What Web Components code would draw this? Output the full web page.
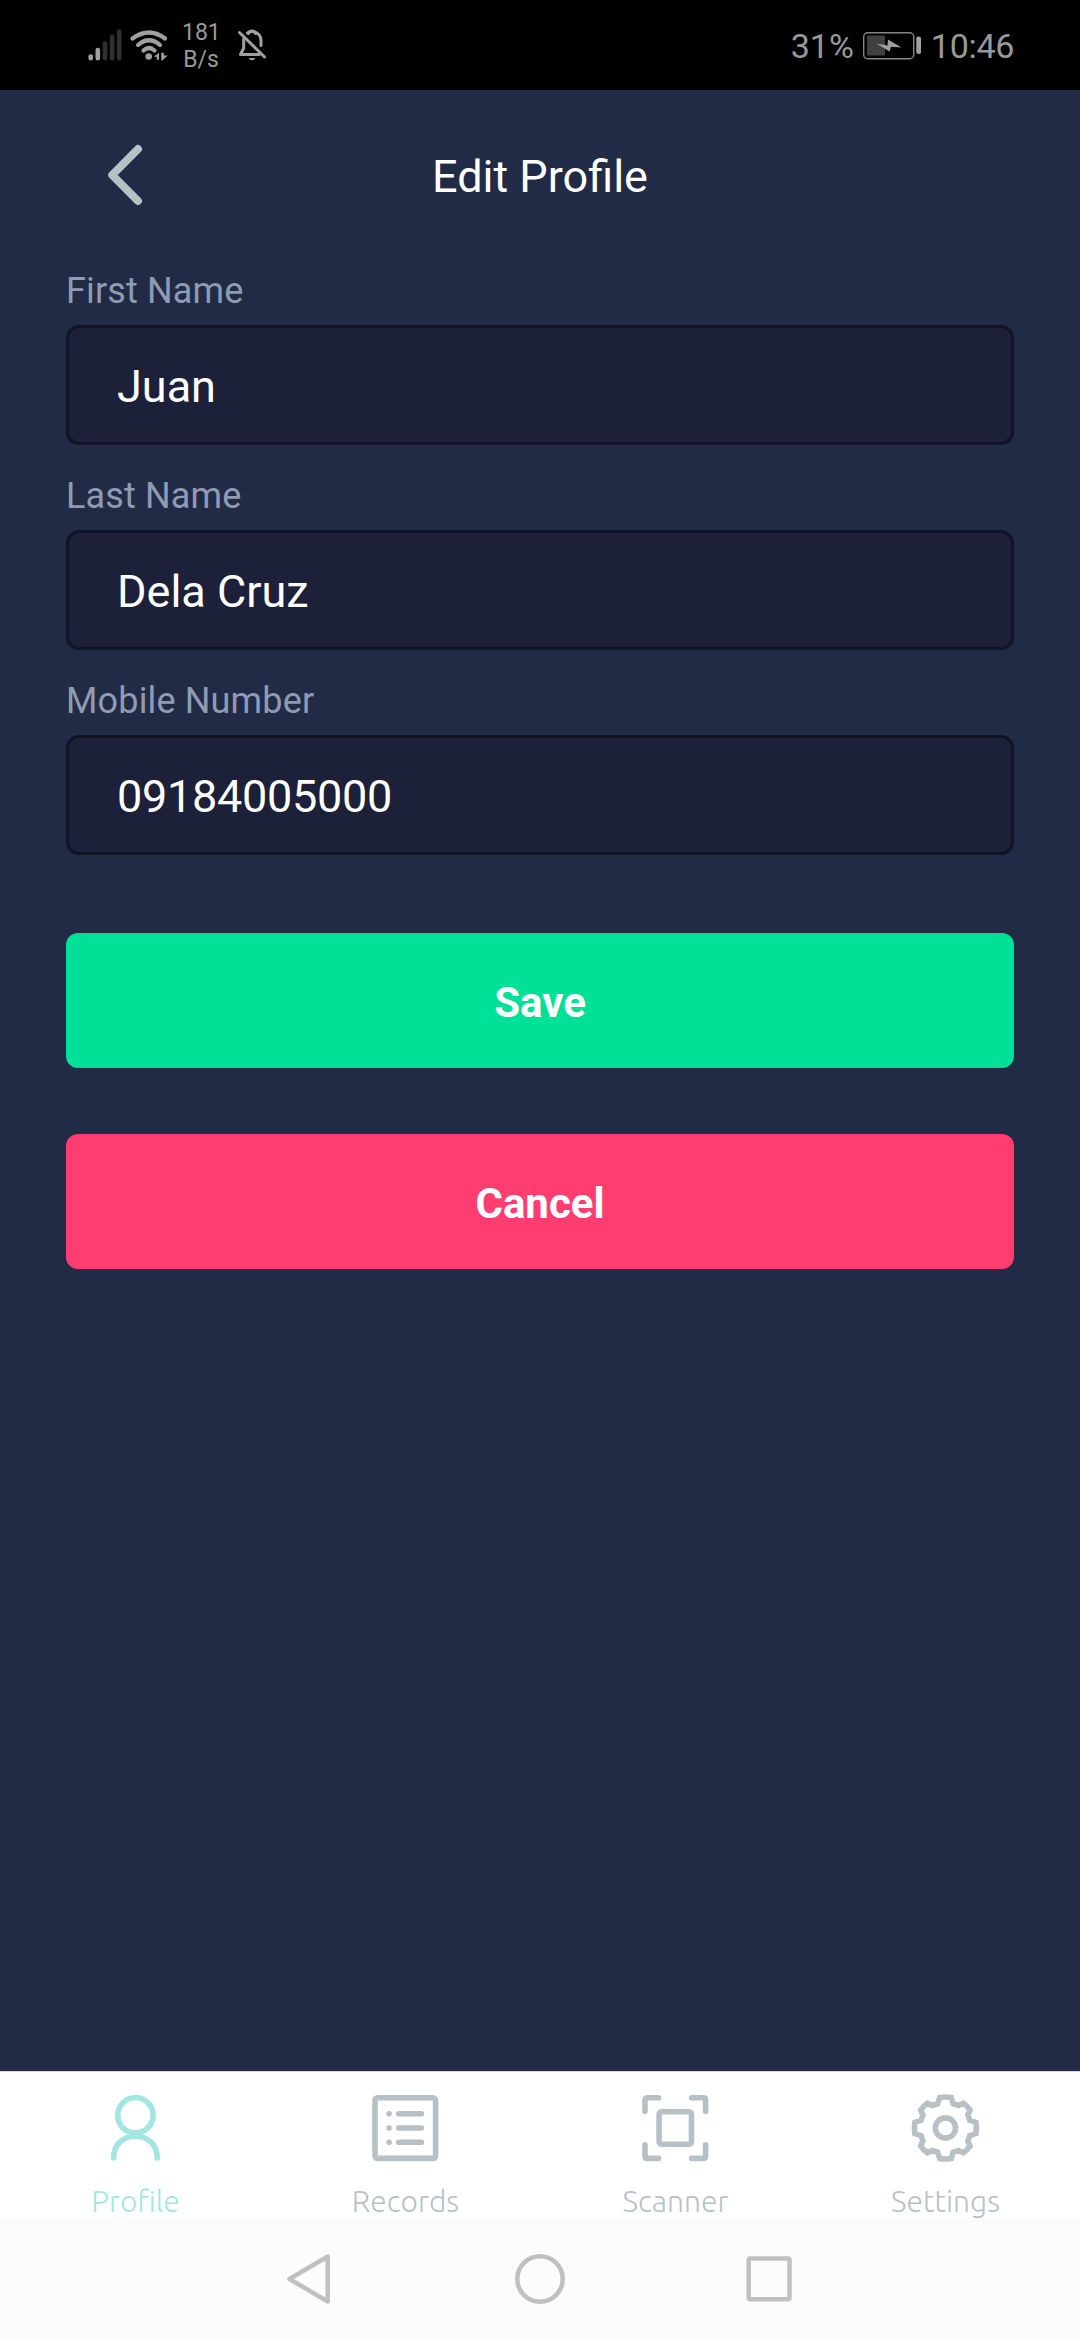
<!DOCTYPE html>
<html lang="en">
<head>
<meta charset="utf-8">
<title>Edit Profile</title>
<style>
html,body{margin:0;padding:0;background:#222b45}
body{width:1080px;height:2340px;overflow:hidden;font-family:Roboto,"Noto Sans",sans-serif}
</style>
</head>
<body>
<profile-screen></profile-screen>
<script>
const define = (name, html) => {
  const t = document.createElement('template');
  t.innerHTML = html;
  customElements.define(name, class extends HTMLElement {
    constructor() {
      super();
      this.attachShadow({ mode: 'open' }).appendChild(t.content.cloneNode(true));
    }
  });
};

define('status-bar', `
<style>
:host{display:flex;justify-content:space-between;height:90px;background:#000;color:#999;box-sizing:border-box;padding:0 66px 0 87px}
.side{display:flex;align-items:flex-start}
svg{display:block}
.rate{width:38px;margin:19px 0 0 1px;font-size:23px;line-height:27px;text-align:center}
.rate div{white-space:nowrap}
.bell{margin-left:17px}
.pct{font-size:34px;line-height:40px;margin-top:26px}
.bat{margin:0 9px 0 8px}
.time{font-size:34px;line-height:40px;margin-top:26px;letter-spacing:-.3px}
</style>
<div class="side">
<svg width="94" height="90" viewBox="87 0 94 90" fill="none">
<g stroke-width="4.6" stroke-linecap="round"><path stroke="#a0a0a0" d="M90.7 56.5v1.8M97.8 50v8.3"/><path stroke="#303030" d="M105 43.5v14.8M112.1 37v21.3M119.2 31.5v26.8"/></g>
<g stroke="#a0a0a0" stroke-width="4.2" stroke-linecap="round"><path d="M132.5 38.5Q149 26.500 165 38.500M138 45Q149 35.500 160 45M143.500 50.500Q149 45.500 154.500 50.500"/></g>
<circle cx="148.700" cy="56.500" r="3.300" fill="#a0a0a0"/>
<path fill="#a0a0a0" d="M153.700 56.800l5.300-4v7h-2.300v-3zM161.300 52.800h2.600v2.800h3.800l-5.400 5h-1z"/>
</svg>
<div class="rate"><div>181</div><div>B/s</div></div>
<svg class="bell" width="32" height="90" viewBox="237 0 32 90" fill="none" stroke="#a0a0a0" stroke-width="3" stroke-linecap="round" stroke-linejoin="round">
<path d="M239.500 32.500L264.500 57M243.700 39V48L240.500 54.500H259M247.500 33Q249.300 31.600 252 31.200 261 33 261 40.500V45.500"/>
<path d="M248.500 33.500Q249 31 252 31t3.500 2.500"/><path fill="#a0a0a0" stroke="none" d="M248.700 58h6.600q-.8 2.300-3.300 2.300t-3.300-2.300z"/>
</svg>
</div>
<div class="side">
<div class="pct">31%</div>
<svg class="bat" width="60" height="90" viewBox="861 0 60 90">
<rect x="862.700" y="32.700" width="50" height="26" rx="4" fill="none" stroke="#858585" stroke-width="1.400"/>
<path fill="#404040" d="M866 35.500h18v20h-18z"/><rect x="915.300" y="36.500" width="4.700" height="17.500" rx="2" fill="#a0a0a0"/>
<path fill="#a0a0a0" d="M875.500 43.500L886.500 45.500 887 39.500 900.500 47.500 890 46.800 888.500 51.500z"/>
</svg>
<div class="time">10:46</div>
</div>`);

define('page-header', `
<style>
:host{display:grid;grid-template-columns:1fr auto 1fr;align-items:center;height:172px}
svg{display:block;margin-left:100px;margin-bottom:2px}
h1{margin:0;padding-top:2px;font-size:45px;font-weight:400;line-height:54px;color:#fff}
</style>
<svg width="50" height="72" viewBox="100 138 50 72" fill="none" stroke="#b7c1c5" stroke-width="8" stroke-linecap="round" stroke-linejoin="round"><path d="M138 148L112.200 174 138 200"/></svg>
<h1><slot></slot></h1>`);

define('form-field', `
<style>
:host{display:flex;flex-direction:column}
label{font-size:36px;line-height:44px;padding-top:1px;margin-bottom:12px;letter-spacing:.15px;color:#8f9bb3;white-space:nowrap}
.box{display:flex;align-items:center;box-sizing:border-box;height:120px;border:3px solid #101426;border-radius:13px;background:#1c2039;padding:4px 48px 0;font-size:45px;line-height:54px;color:#fff}
</style>
<label><slot name="label"></slot></label>
<div class="box"><slot></slot></div>`);

define('action-button', `
<style>
:host{display:flex;align-items:center;justify-content:center;height:135px;box-sizing:border-box;padding-top:5px;border-radius:12px;background:var(--fill);color:#fff;font-size:42px;font-weight:700;line-height:48px}
</style><slot></slot>`);

define('tab-item', `
<style>
:host{display:flex;flex-direction:column;align-items:center;flex:1 1 0;color:#b7c1c5;padding-top:20px;font:300 30px/30px Ubuntu,"Noto Sans",sans-serif}
:host([active]){color:#a1e6e1}
::slotted(svg){flex:none}
.label{margin-top:22px;padding-left:1px;white-space:nowrap}
</style>
<slot name="icon"></slot><div class="label"><slot></slot></div>`);

define('tab-bar', `
<style>
:host{display:flex;height:147px;background:#fff;border-top:1px solid #d5d9e4;box-sizing:border-box}
svg{display:block;fill:none;stroke:currentColor;stroke-width:5.6;stroke-linecap:round;stroke-linejoin:round}
.dot{fill:currentColor;stroke:none}
</style>
<tab-item active><svg slot="icon" width="72" height="72" viewBox="-36.400 -36 72 72"><circle cx="0" cy="-12.800" r="17.700"/><path d="M-21.800 30C-21.800 17 -13 8.300 0 8.300S21.800 17 21.800 30"/></svg><span>Profile</span></tab-item>
<tab-item><svg slot="icon" width="72" height="72" viewBox="-36.400 -36 72 72"><rect x="-30.400" y="-30.200" width="60.600" height="60.600" rx="2.500"/><path d="M-6.700-14.200H16M-6.700 0H16M-6.700 14.200H16"/><circle class="dot" cx="-16.300" cy="-14.200" r="2.800"/><circle class="dot" cx="-16.300" cy="0" r="2.800"/><circle class="dot" cx="-16.300" cy="14.200" r="2.800"/></svg><span>Records</span></tab-item>
<tab-item><svg slot="icon" width="72" height="72" viewBox="-36.400 -36 72 72"><path d="M-30.400-16.800V-27.700Q-30.400-30.200-27.900-30.200H-16.800M16.300-30.200H27.700Q30.200-30.200 30.200-27.700V-16.800M30.200 16.800V27.900Q30.200 30.400 27.700 30.400H16.300M-16.800 30.400H-27.900Q-30.400 30.400-30.400 27.900V16.800"/><rect x="-16.300" y="-16.200" width="32.400" height="32.400" rx="2.500"/></svg><span>Scanner</span></tab-item>
<tab-item><svg slot="icon" width="72" height="72" viewBox="-36.400 -36 72 72"><path stroke-linejoin="miter" d="M-5.700-30.500Q0-31.500 5.700-30.500L7.700-24.300 13-22.500 18-24.700Q22-22 24.700-18L22.500-13 24.300-7.700 30.500-5.700Q31.500 0 30.500 5.700L24.300 7.700 22.500 13 24.700 18Q22 22 18 24.700L13 22.500 7.700 24.300 5.700 30.500Q0 31.500-5.700 30.500L-7.700 24.300-13 22.500-18 24.700Q-22 22-24.700 18L-22.500 13-24.300 7.700-30.500 5.700Q-31.500 0-30.500-5.700L-24.300-7.700-22.500-13-24.700-18Q-22-22-18-24.700L-13-22.500-7.700-24.300Z"/><circle cx="0" cy="0" r="10.100"/></svg><span>Settings</span></tab-item>`);

define('system-nav', `
<style>
:host{display:flex;align-items:center;justify-content:center;gap:174px;height:122px;background:#fcfcfc}
svg{display:block;fill:none;stroke:#c0c0c0;stroke-width:4.500;stroke-linejoin:round}
</style>
<svg width="56" height="56" viewBox="282 2251 56 56"><path d="M289.500 2279L327.700 2256.500V2301.500Z"/></svg>
<svg width="56" height="56" viewBox="512 2251 56 56"><circle cx="540" cy="2279" r="22.700"/></svg>
<svg width="56" height="56" viewBox="742 2251 56 56"><rect x="748.700" y="2258.500" width="40.800" height="40.800" rx="1.500"/></svg>`);

define('profile-screen', `
<style>
:host{display:flex;flex-direction:column;width:1080px;height:2340px;background:#222b45}
main{flex:1;display:flex;flex-direction:column}
form{display:flex;flex-direction:column;padding:6px 66px 0}
.fields{display:flex;flex-direction:column;gap:28px;margin-bottom:78px}
.actions{display:flex;flex-direction:column;gap:66px}
.digits{letter-spacing:-.3px}
</style>
<status-bar></status-bar>
<main>
<page-header>Edit Profile</page-header>
<form>
<div class="fields">
<form-field><span slot="label">First Name</span>Juan</form-field>
<form-field><span slot="label">Last Name</span>Dela Cruz</form-field>
<form-field><span slot="label">Mobile Number</span><span class="digits">09184005000</span></form-field>
</div>
<div class="actions">
<action-button style="--fill:#00e096">Save</action-button>
<action-button style="--fill:#ff3d71">Cancel</action-button>
</div>
</form>
</main>
<tab-bar></tab-bar>
<system-nav></system-nav>`);
</script>
</body>
</html>
